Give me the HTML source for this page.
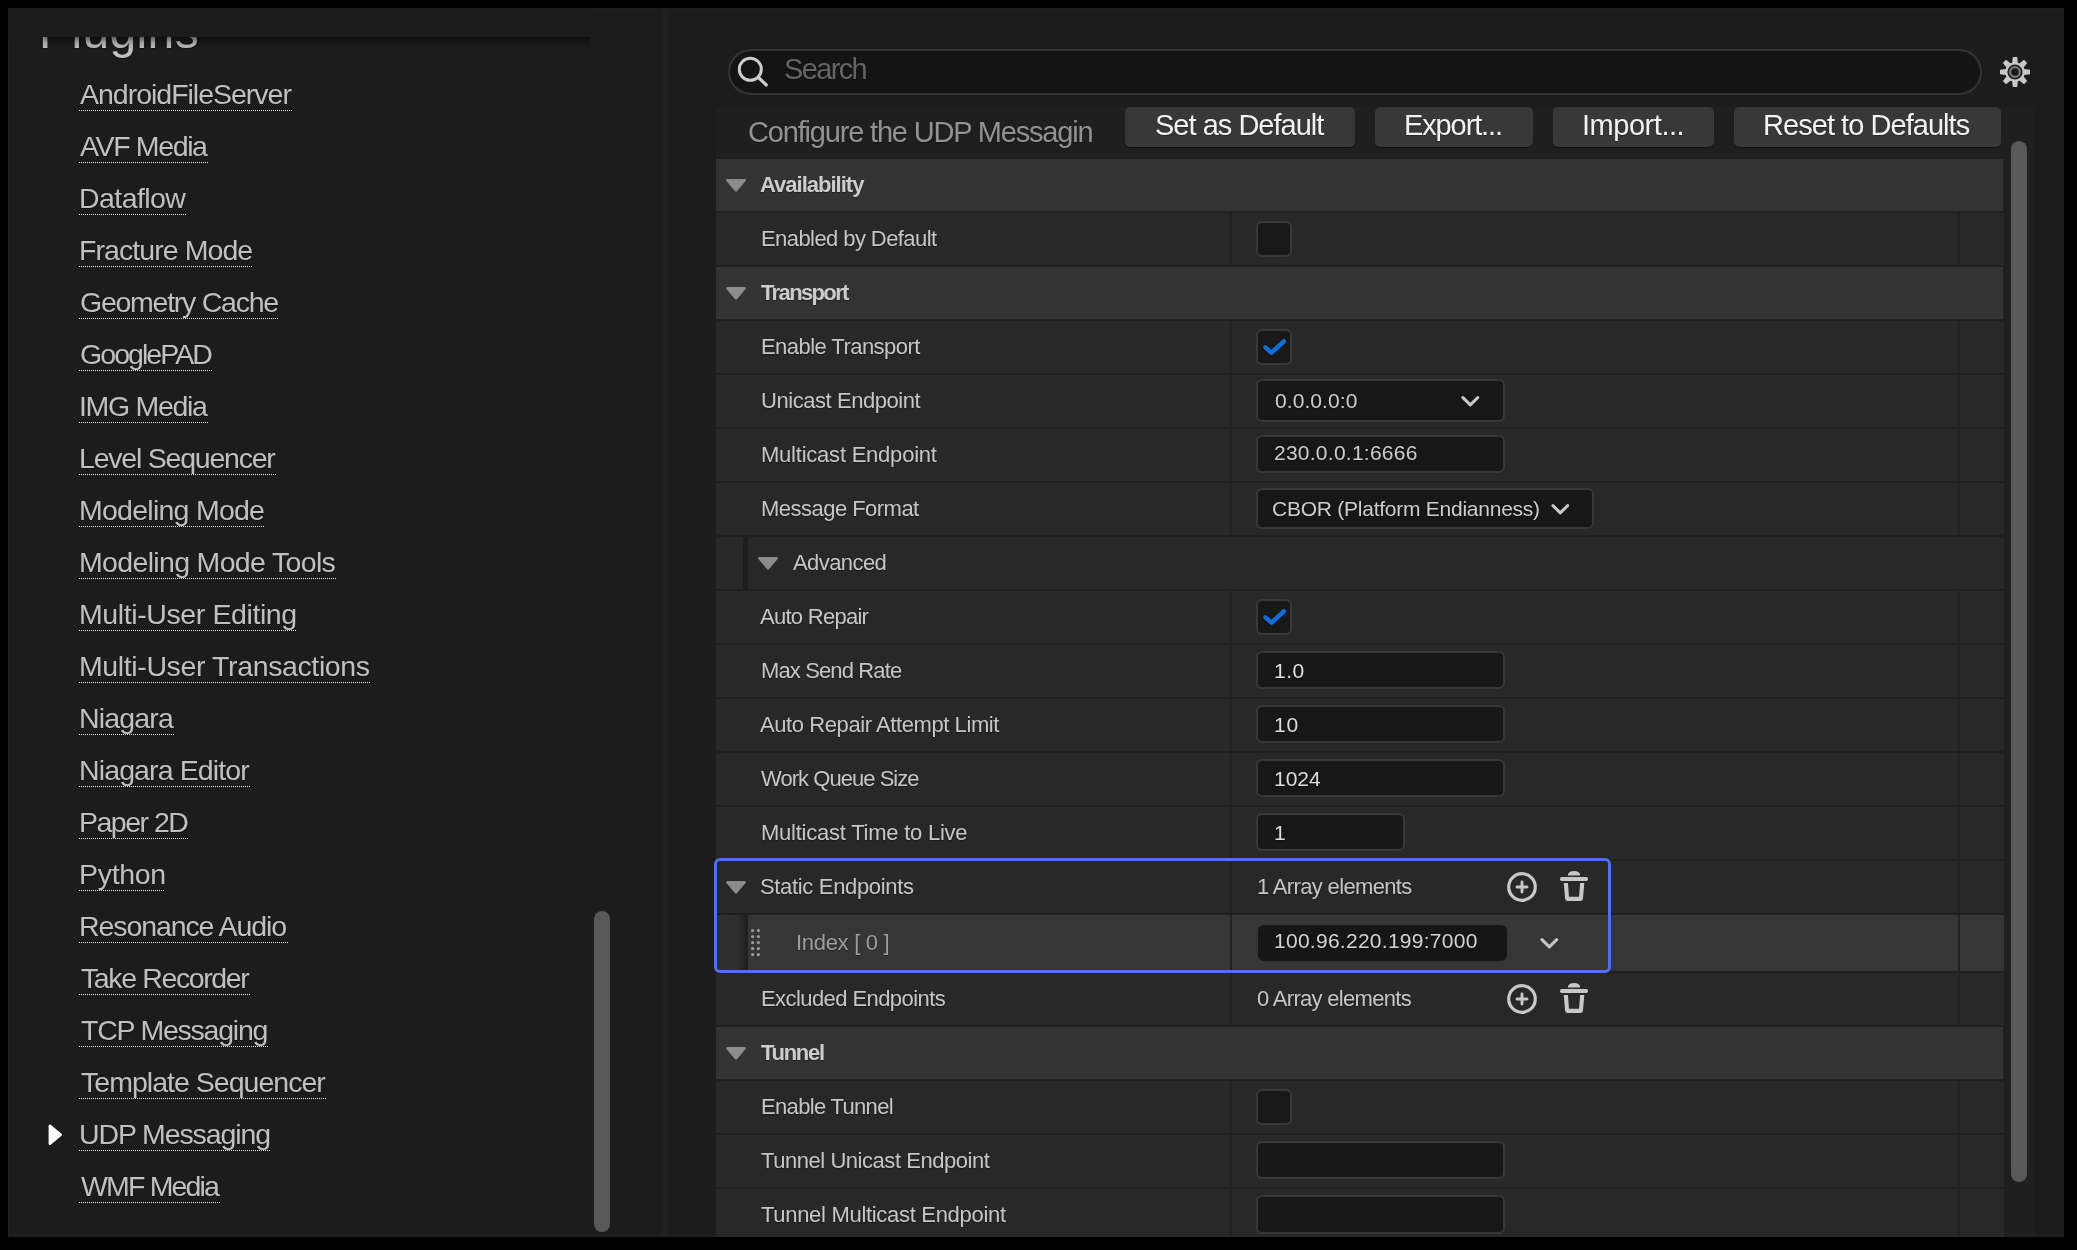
<!DOCTYPE html>
<html><head><meta charset="utf-8"><style>
html,body{margin:0;padding:0}
body{width:2077px;height:1250px;background:#000;position:relative;overflow:hidden;font-family:"Liberation Sans", sans-serif}
.t{position:absolute;white-space:pre;text-shadow:0 1px 1px rgba(0,0,0,0.35);will-change:transform}
.ul{position:absolute;height:1px;background-image:linear-gradient(to right,#e8e8e8 50%,transparent 50%);background-size:2px 1px}
#panel{position:absolute;left:8px;top:8px;width:2055px;height:1227px;background:#1c1c1c;border-left:1px solid #222;border-top:1px solid #202020;border-bottom:1px solid #202020}
#hdrcover{position:absolute;left:8px;top:8px;width:582px;height:29px;background:#1c1c1c}
#hdrshadow{position:absolute;left:38px;top:37px;width:552px;height:12px;background:linear-gradient(to bottom,rgba(0,0,0,0.5),rgba(0,0,0,0.18) 45%,rgba(0,0,0,0));-webkit-mask-image:linear-gradient(to right,transparent 0,#000 8px)}
#split{position:absolute;left:662px;top:8px;width:6px;height:1229px;background:#202020}
#sscroll{position:absolute;left:594px;top:911px;width:16px;height:321px;border-radius:8px;background:#595959}
#search{position:absolute;left:728px;top:49px;width:1250px;height:42px;border:2px solid #353535;border-radius:23px;background:#141414}
#main{position:absolute;left:716px;top:107px;width:1319px;height:1130px;background:#1f1f1f}
#mscroll{position:absolute;left:2011px;top:141px;width:16px;height:1041px;border-radius:8px;background:#595959}
.btn{position:absolute;top:107px;height:40px;background:#383838;border-radius:5px;box-shadow:0 1px 1px rgba(0,0,0,0.5)}
.row{position:absolute;left:716px;width:1288px}
.hdr{background:#333333;width:1287px}
.prop{background:#282828}
.idx{background:#363636}
.idxl{width:32px;background:linear-gradient(to right,#2f2f2f 0,#2e2e2e 22px,#1f1f1f 31px,#1f1f1f 32px)}
.advstripe{position:absolute;left:743px;width:5px;background:#1e1e1e}
.div1{position:absolute;left:1230px;width:2px;background:#222}
.div2{position:absolute;left:1958px;width:2px;background:#222}
.tri{position:absolute}
.cb{position:absolute;left:1256px;width:32px;height:32px;border:2px solid #393939;border-radius:6px;background:#181818}
.fld{position:absolute;left:1256px;box-sizing:border-box;border:2px solid #383838;border-radius:6px;background:#171717}
.fld.nob{border:none;background:#161616}
.chev{position:absolute}
.ico{position:absolute}
#sel{position:absolute;left:714px;top:858px;width:891px;height:109px;border:3px solid #506ef8;border-radius:6px}
</style></head><body>
<div id="panel"></div>
<div id="split"></div>

<div class="t lk" style="left:79.60px;top:80.38px;font-size:28.5px;line-height:28.5px;color:#c0c0c0;letter-spacing:-1.013px">AndroidFileServer</div>
<div class="ul" style="left:79px;top:110px;width:214px"></div>
<div class="t lk" style="left:79.60px;top:132.38px;font-size:28.5px;line-height:28.5px;color:#c0c0c0;letter-spacing:-1.363px">AVF Media</div>
<div class="ul" style="left:79px;top:162px;width:129px"></div>
<div class="t lk" style="left:78.70px;top:184.38px;font-size:28.5px;line-height:28.5px;color:#c0c0c0;letter-spacing:-0.572px">Dataflow</div>
<div class="ul" style="left:79px;top:214px;width:108px"></div>
<div class="t lk" style="left:78.70px;top:236.38px;font-size:28.5px;line-height:28.5px;color:#c0c0c0;letter-spacing:-0.931px">Fracture Mode</div>
<div class="ul" style="left:79px;top:266px;width:174px"></div>
<div class="t lk" style="left:79.70px;top:288.38px;font-size:28.5px;line-height:28.5px;color:#c0c0c0;letter-spacing:-1.252px">Geometry Cache</div>
<div class="ul" style="left:79px;top:318px;width:200px"></div>
<div class="t lk" style="left:79.70px;top:340.38px;font-size:28.5px;line-height:28.5px;color:#c0c0c0;letter-spacing:-1.938px">GooglePAD</div>
<div class="ul" style="left:79px;top:370px;width:134px"></div>
<div class="t lk" style="left:78.70px;top:392.38px;font-size:28.5px;line-height:28.5px;color:#c0c0c0;letter-spacing:-1.315px">IMG Media</div>
<div class="ul" style="left:79px;top:422px;width:129px"></div>
<div class="t lk" style="left:78.70px;top:444.38px;font-size:28.5px;line-height:28.5px;color:#c0c0c0;letter-spacing:-1.222px">Level Sequencer</div>
<div class="ul" style="left:79px;top:474px;width:198px"></div>
<div class="t lk" style="left:78.70px;top:496.38px;font-size:28.5px;line-height:28.5px;color:#c0c0c0;letter-spacing:-0.743px">Modeling Mode</div>
<div class="ul" style="left:79px;top:526px;width:185px"></div>
<div class="t lk" style="left:78.70px;top:548.38px;font-size:28.5px;line-height:28.5px;color:#c0c0c0;letter-spacing:-0.665px">Modeling Mode Tools</div>
<div class="ul" style="left:79px;top:578px;width:257px"></div>
<div class="t lk" style="left:78.70px;top:600.38px;font-size:28.5px;line-height:28.5px;color:#c0c0c0;letter-spacing:-0.397px">Multi-User Editing</div>
<div class="ul" style="left:79px;top:630px;width:218px"></div>
<div class="t lk" style="left:78.70px;top:652.38px;font-size:28.5px;line-height:28.5px;color:#c0c0c0;letter-spacing:-0.377px">Multi-User Transactions</div>
<div class="ul" style="left:79px;top:682px;width:292px"></div>
<div class="t lk" style="left:78.70px;top:704.38px;font-size:28.5px;line-height:28.5px;color:#c0c0c0;letter-spacing:-0.826px">Niagara</div>
<div class="ul" style="left:79px;top:734px;width:95px"></div>
<div class="t lk" style="left:78.70px;top:756.38px;font-size:28.5px;line-height:28.5px;color:#c0c0c0;letter-spacing:-0.876px">Niagara Editor</div>
<div class="ul" style="left:79px;top:786px;width:172px"></div>
<div class="t lk" style="left:78.70px;top:808.38px;font-size:28.5px;line-height:28.5px;color:#c0c0c0;letter-spacing:-1.503px">Paper 2D</div>
<div class="ul" style="left:79px;top:838px;width:110px"></div>
<div class="t lk" style="left:78.70px;top:860.38px;font-size:28.5px;line-height:28.5px;color:#c0c0c0;letter-spacing:-0.316px">Python</div>
<div class="ul" style="left:79px;top:890px;width:86px"></div>
<div class="t lk" style="left:78.70px;top:912.38px;font-size:28.5px;line-height:28.5px;color:#c0c0c0;letter-spacing:-1.096px">Resonance Audio</div>
<div class="ul" style="left:79px;top:942px;width:209px"></div>
<div class="t lk" style="left:80.70px;top:964.38px;font-size:28.5px;line-height:28.5px;color:#c0c0c0;letter-spacing:-1.379px">Take Recorder</div>
<div class="ul" style="left:79px;top:994px;width:172px"></div>
<div class="t lk" style="left:80.70px;top:1016.37px;font-size:28.5px;line-height:28.5px;color:#c0c0c0;letter-spacing:-1.241px">TCP Messaging</div>
<div class="ul" style="left:79px;top:1046px;width:189px"></div>
<div class="t lk" style="left:80.70px;top:1068.38px;font-size:28.5px;line-height:28.5px;color:#c0c0c0;letter-spacing:-0.978px">Template Sequencer</div>
<div class="ul" style="left:79px;top:1098px;width:248px"></div>
<div class="t lk" style="left:78.70px;top:1120.38px;font-size:28.5px;line-height:28.5px;color:#c0c0c0;letter-spacing:-1.114px">UDP Messaging</div>
<div class="ul" style="left:79px;top:1150px;width:192px"></div>
<div class="t lk" style="left:80.70px;top:1172.38px;font-size:28.5px;line-height:28.5px;color:#c0c0c0;letter-spacing:-1.830px">WMF Media</div>
<div class="ul" style="left:79px;top:1202px;width:141px"></div>
<div class="t" style="left:38.80px;top:7.70px;font-size:48px;line-height:48px;color:#c2c2c2;letter-spacing:0.378px">Plugins</div>
<div id="hdrcover"></div><div id="hdrshadow"></div>
<svg style="position:absolute;left:47px;top:1124px" width="16" height="22" viewBox="0 0 16 22"><path d="M2.9 1.8 V19.8 L13.7 10.8 Z" fill="#ffffff" stroke="#ffffff" stroke-width="2.6" stroke-linejoin="round"/></svg>
<div id="sscroll"></div>
<div id="search"></div>
<svg style="position:absolute;left:734px;top:53px" width="38" height="38" viewBox="0 0 38 38"><circle cx="16.3" cy="16.3" r="11" fill="none" stroke="#cdcdcd" stroke-width="3"/><path d="M24.6 24.6 L32.3 32" stroke="#cdcdcd" stroke-width="3.2" stroke-linecap="round"/></svg>
<svg style="position:absolute;left:1999px;top:56px" width="32" height="32" viewBox="-16 -16 32 32">
<g fill="#c8c8c8"><path d="M-2.9 -9 L-2.2 -15 L2.2 -15 L2.9 -9 Z" transform="rotate(0)"/><path d="M-2.9 -9 L-2.2 -15 L2.2 -15 L2.9 -9 Z" transform="rotate(45)"/><path d="M-2.9 -9 L-2.2 -15 L2.2 -15 L2.9 -9 Z" transform="rotate(90)"/><path d="M-2.9 -9 L-2.2 -15 L2.2 -15 L2.9 -9 Z" transform="rotate(135)"/><path d="M-2.9 -9 L-2.2 -15 L2.2 -15 L2.9 -9 Z" transform="rotate(180)"/><path d="M-2.9 -9 L-2.2 -15 L2.2 -15 L2.9 -9 Z" transform="rotate(225)"/><path d="M-2.9 -9 L-2.2 -15 L2.2 -15 L2.9 -9 Z" transform="rotate(270)"/><path d="M-2.9 -9 L-2.2 -15 L2.2 -15 L2.9 -9 Z" transform="rotate(315)"/>
<circle r="9.8"/></g><circle r="7.6" fill="#1c1c1c"/><circle r="4.9" fill="none" stroke="#7a7a7a" stroke-width="2.2"/></svg>
<div id="main"></div>
<div class="btn" style="left:1125px;width:230px"></div>
<div class="btn" style="left:1375px;width:158px"></div>
<div class="btn" style="left:1553px;width:161px"></div>
<div class="btn" style="left:1734px;width:267px"></div>
<div id="mscroll"></div>
<div class="row hdr" style="top:159px;height:52px"></div>
<svg class="tri" style="left:726px;top:178.5px" width="20" height="13" viewBox="0 0 20 13"><path d="M1.3 1.3 L18.7 1.3 L10 11.4 Z" fill="#8c8c8c" stroke="#8c8c8c" stroke-width="2.4" stroke-linejoin="round"/></svg>
<div class="row prop" style="top:213px;height:52px"></div>
<div class="div1" style="top:213px;height:52px"></div><div class="div2" style="top:213px;height:52px"></div>
<div class="row hdr" style="top:267px;height:52px"></div>
<svg class="tri" style="left:726px;top:286.5px" width="20" height="13" viewBox="0 0 20 13"><path d="M1.3 1.3 L18.7 1.3 L10 11.4 Z" fill="#8c8c8c" stroke="#8c8c8c" stroke-width="2.4" stroke-linejoin="round"/></svg>
<div class="row prop" style="top:321px;height:52px"></div>
<div class="div1" style="top:321px;height:52px"></div><div class="div2" style="top:321px;height:52px"></div>
<div class="row prop" style="top:375px;height:52px"></div>
<div class="div1" style="top:375px;height:52px"></div><div class="div2" style="top:375px;height:52px"></div>
<div class="row prop" style="top:429px;height:52px"></div>
<div class="div1" style="top:429px;height:52px"></div><div class="div2" style="top:429px;height:52px"></div>
<div class="row prop" style="top:483px;height:52px"></div>
<div class="div1" style="top:483px;height:52px"></div><div class="div2" style="top:483px;height:52px"></div>
<div class="row prop" style="top:537px;height:52px"></div>
<div class="advstripe" style="top:537px;height:52px"></div>
<svg class="tri" style="left:758px;top:557px" width="20" height="13" viewBox="0 0 20 13"><path d="M1.3 1.3 L18.7 1.3 L10 11.4 Z" fill="#8c8c8c" stroke="#8c8c8c" stroke-width="2.4" stroke-linejoin="round"/></svg>
<div class="row prop" style="top:591px;height:52px"></div>
<div class="div1" style="top:591px;height:52px"></div><div class="div2" style="top:591px;height:52px"></div>
<div class="row prop" style="top:645px;height:52px"></div>
<div class="div1" style="top:645px;height:52px"></div><div class="div2" style="top:645px;height:52px"></div>
<div class="row prop" style="top:699px;height:52px"></div>
<div class="div1" style="top:699px;height:52px"></div><div class="div2" style="top:699px;height:52px"></div>
<div class="row prop" style="top:753px;height:52px"></div>
<div class="div1" style="top:753px;height:52px"></div><div class="div2" style="top:753px;height:52px"></div>
<div class="row prop" style="top:807px;height:52px"></div>
<div class="div1" style="top:807px;height:52px"></div><div class="div2" style="top:807px;height:52px"></div>
<div class="row prop" style="top:861px;height:52px"></div>
<div class="div1" style="top:861px;height:52px"></div><div class="div2" style="top:861px;height:52px"></div>
<svg class="tri" style="left:726px;top:880.5px" width="20" height="13" viewBox="0 0 20 13"><path d="M1.3 1.3 L18.7 1.3 L10 11.4 Z" fill="#8c8c8c" stroke="#8c8c8c" stroke-width="2.4" stroke-linejoin="round"/></svg>
<div class="row idx" style="top:915px;height:56px"></div>
<div class="row idxl" style="top:915px;height:56px"></div>
<div class="div1" style="top:915px;height:56px"></div><div class="div2" style="top:915px;height:56px"></div>
<div class="row prop" style="top:973px;height:52px"></div>
<div class="div1" style="top:973px;height:52px"></div><div class="div2" style="top:973px;height:52px"></div>
<div class="row hdr" style="top:1027px;height:52px"></div>
<svg class="tri" style="left:726px;top:1046.5px" width="20" height="13" viewBox="0 0 20 13"><path d="M1.3 1.3 L18.7 1.3 L10 11.4 Z" fill="#8c8c8c" stroke="#8c8c8c" stroke-width="2.4" stroke-linejoin="round"/></svg>
<div class="row prop" style="top:1081px;height:52px"></div>
<div class="div1" style="top:1081px;height:52px"></div><div class="div2" style="top:1081px;height:52px"></div>
<div class="row prop" style="top:1135px;height:52px"></div>
<div class="div1" style="top:1135px;height:52px"></div><div class="div2" style="top:1135px;height:52px"></div>
<div class="row prop" style="top:1189px;height:48px"></div>
<div class="div1" style="top:1189px;height:48px"></div><div class="div2" style="top:1189px;height:48px"></div>
<div class="cb" style="top:221px"></div>
<div class="cb" style="top:329px"><svg width="36" height="36" viewBox="0 0 36 36" style="position:absolute;left:-2px;top:-2px"><path d="M9.4 18.4 L15.5 23.7 L27.8 12.3" fill="none" stroke="#0a70e0" stroke-width="4.4" stroke-linecap="round" stroke-linejoin="round"/></svg></div>
<div class="cb" style="top:599px"><svg width="36" height="36" viewBox="0 0 36 36" style="position:absolute;left:-2px;top:-2px"><path d="M9.4 18.4 L15.5 23.7 L27.8 12.3" fill="none" stroke="#0a70e0" stroke-width="4.4" stroke-linecap="round" stroke-linejoin="round"/></svg></div>
<div class="cb" style="top:1089px"></div>
<div class="fld" style="top:379px;width:249px;height:43px"></div>
<svg class="chev" style="left:1460.6px;top:395.6px" width="19" height="11" viewBox="0 0 19 11"><path d="M1.9 1.6 L9.3 8.8 L16.7 1.6" fill="none" stroke="#c8c8c8" stroke-width="3" stroke-linecap="round" stroke-linejoin="round"/></svg>
<div class="fld" style="top:435px;width:249px;height:38px"></div>
<div class="fld" style="top:488px;width:338px;height:41px"></div>
<svg class="chev" style="left:1550.6px;top:503.9px" width="19" height="11" viewBox="0 0 19 11"><path d="M1.9 1.6 L9.3 8.8 L16.7 1.6" fill="none" stroke="#c8c8c8" stroke-width="3" stroke-linecap="round" stroke-linejoin="round"/></svg>
<div class="fld" style="top:651px;width:249px;height:38px"></div>
<div class="fld" style="top:705px;width:249px;height:38px"></div>
<div class="fld" style="top:759px;width:249px;height:38px"></div>
<div class="fld" style="top:813px;width:149px;height:38px"></div>
<div class="fld nob" style="left:1258px;top:925px;width:249px;height:36px"></div>
<svg class="chev" style="left:1539.6px;top:937.8px" width="19" height="11" viewBox="0 0 19 11"><path d="M1.9 1.6 L9.3 8.8 L16.7 1.6" fill="none" stroke="#c8c8c8" stroke-width="3" stroke-linecap="round" stroke-linejoin="round"/></svg>
<div class="fld" style="top:1141px;width:249px;height:38px"></div>
<div class="fld" style="top:1195px;width:249px;height:39px"></div>
<svg style="position:absolute;left:751.4px;top:929.4px" width="10" height="28" viewBox="0 0 10 28"><rect x="0" y="0" width="3.2" height="3.2" rx="1.6" fill="#9a9a9a"/><rect x="0" y="6" width="3.2" height="3.2" rx="1.6" fill="#9a9a9a"/><rect x="0" y="12" width="3.2" height="3.2" rx="1.6" fill="#9a9a9a"/><rect x="0" y="18" width="3.2" height="3.2" rx="1.6" fill="#9a9a9a"/><rect x="0" y="24" width="3.2" height="3.2" rx="1.6" fill="#9a9a9a"/><rect x="5.8" y="0" width="3.2" height="3.2" rx="1.6" fill="#9a9a9a"/><rect x="5.8" y="6" width="3.2" height="3.2" rx="1.6" fill="#9a9a9a"/><rect x="5.8" y="12" width="3.2" height="3.2" rx="1.6" fill="#9a9a9a"/><rect x="5.8" y="18" width="3.2" height="3.2" rx="1.6" fill="#9a9a9a"/><rect x="5.8" y="24" width="3.2" height="3.2" rx="1.6" fill="#9a9a9a"/></svg>
<svg class="ico" style="left:1505px;top:870px" width="34" height="34" viewBox="0 0 34 34"><circle cx="17" cy="17" r="13.3" fill="none" stroke="#c8c8c8" stroke-width="3.2"/><path d="M17 12 V22 M12 17 H22" stroke="#c8c8c8" stroke-width="2.9" stroke-linecap="round"/></svg><svg class="ico" style="left:1556px;top:867px" width="36" height="34" viewBox="0 0 36 34"><path d="M11.9 8.5 Q11.9 4 18 4 Q24.2 4 24.2 8.5 Z" fill="#c8c8c8"/><rect x="3.9" y="9.9" width="28.2" height="4.1" rx="2" fill="#c8c8c8"/><path d="M7.8 16 H28.3 L27 31.5 Q26.8 34 24.3 34 H11.8 Q9.3 34 9.1 31.5 Z M11.9 16 L13 29.7 H23 L24.2 16 Z" fill="#c8c8c8" fill-rule="evenodd"/></svg>
<svg class="ico" style="left:1505px;top:982px" width="34" height="34" viewBox="0 0 34 34"><circle cx="17" cy="17" r="13.3" fill="none" stroke="#c8c8c8" stroke-width="3.2"/><path d="M17 12 V22 M12 17 H22" stroke="#c8c8c8" stroke-width="2.9" stroke-linecap="round"/></svg><svg class="ico" style="left:1556px;top:979px" width="36" height="34" viewBox="0 0 36 34"><path d="M11.9 8.5 Q11.9 4 18 4 Q24.2 4 24.2 8.5 Z" fill="#c8c8c8"/><rect x="3.9" y="9.9" width="28.2" height="4.1" rx="2" fill="#c8c8c8"/><path d="M7.8 16 H28.3 L27 31.5 Q26.8 34 24.3 34 H11.8 Q9.3 34 9.1 31.5 Z M11.9 16 L13 29.7 H23 L24.2 16 Z" fill="#c8c8c8" fill-rule="evenodd"/></svg>
<div class="t" style="left:784.40px;top:55.15px;font-size:29px;line-height:29px;color:#646464;letter-spacing:-1.651px">Search</div>
<div class="t" style="left:748.00px;top:118.35px;font-size:29px;line-height:29px;color:#929292;letter-spacing:-1.178px">Configure the UDP Messagin</div>
<div class="t" style="left:1154.70px;top:111.35px;font-size:29px;line-height:29px;color:#f2f2f2;letter-spacing:-0.985px">Set as Default</div>
<div class="t" style="left:1404.00px;top:111.35px;font-size:29px;line-height:29px;color:#f2f2f2;letter-spacing:-1.116px">Export...</div>
<div class="t" style="left:1582.00px;top:111.35px;font-size:29px;line-height:29px;color:#f2f2f2;letter-spacing:-0.462px">Import...</div>
<div class="t" style="left:1763.00px;top:111.35px;font-size:29px;line-height:29px;color:#f2f2f2;letter-spacing:-0.953px">Reset to Defaults</div>
<div class="t" style="left:760.20px;top:173.60px;font-size:22px;line-height:22px;color:#cccccc;letter-spacing:-0.991px;font-weight:700">Availability</div>
<div class="t" style="left:760.70px;top:227.90px;font-size:22px;line-height:22px;color:#c6c6c6;letter-spacing:-0.576px">Enabled by Default</div>
<div class="t" style="left:760.60px;top:281.60px;font-size:22px;line-height:22px;color:#cccccc;letter-spacing:-1.629px;font-weight:700">Transport</div>
<div class="t" style="left:760.70px;top:335.90px;font-size:22px;line-height:22px;color:#c6c6c6;letter-spacing:-0.549px">Enable Transport</div>
<div class="t" style="left:760.70px;top:389.90px;font-size:22px;line-height:22px;color:#c6c6c6;letter-spacing:-0.441px">Unicast Endpoint</div>
<div class="t" style="left:760.70px;top:443.90px;font-size:22px;line-height:22px;color:#c6c6c6;letter-spacing:-0.226px">Multicast Endpoint</div>
<div class="t" style="left:760.70px;top:497.90px;font-size:22px;line-height:22px;color:#c6c6c6;letter-spacing:-0.526px">Message Format</div>
<div class="t" style="left:792.70px;top:551.90px;font-size:22px;line-height:22px;color:#c6c6c6;letter-spacing:-0.574px">Advanced</div>
<div class="t" style="left:760.20px;top:605.90px;font-size:22px;line-height:22px;color:#c6c6c6;letter-spacing:-0.725px">Auto Repair</div>
<div class="t" style="left:760.70px;top:659.90px;font-size:22px;line-height:22px;color:#c6c6c6;letter-spacing:-0.875px">Max Send Rate</div>
<div class="t" style="left:760.20px;top:713.90px;font-size:22px;line-height:22px;color:#c6c6c6;letter-spacing:-0.419px">Auto Repair Attempt Limit</div>
<div class="t" style="left:760.50px;top:767.90px;font-size:22px;line-height:22px;color:#c6c6c6;letter-spacing:-0.962px">Work Queue Size</div>
<div class="t" style="left:760.70px;top:821.90px;font-size:22px;line-height:22px;color:#c6c6c6;letter-spacing:-0.237px">Multicast Time to Live</div>
<div class="t" style="left:760.00px;top:875.50px;font-size:22px;line-height:22px;color:#c6c6c6;letter-spacing:-0.332px">Static Endpoints</div>
<div class="t" style="left:795.50px;top:931.90px;font-size:22px;line-height:22px;color:#9d9d9d;letter-spacing:-0.300px">Index [ 0 ]</div>
<div class="t" style="left:760.70px;top:987.90px;font-size:22px;line-height:22px;color:#c6c6c6;letter-spacing:-0.574px">Excluded Endpoints</div>
<div class="t" style="left:760.60px;top:1041.60px;font-size:22px;line-height:22px;color:#cccccc;letter-spacing:-1.291px;font-weight:700">Tunnel</div>
<div class="t" style="left:760.70px;top:1095.90px;font-size:22px;line-height:22px;color:#c6c6c6;letter-spacing:-0.673px">Enable Tunnel</div>
<div class="t" style="left:760.60px;top:1149.90px;font-size:22px;line-height:22px;color:#c6c6c6;letter-spacing:-0.453px">Tunnel Unicast Endpoint</div>
<div class="t" style="left:760.60px;top:1203.90px;font-size:22px;line-height:22px;color:#c6c6c6;letter-spacing:-0.305px">Tunnel Multicast Endpoint</div>
<div class="t" style="left:1274.50px;top:390.15px;font-size:21px;line-height:21px;color:#cdcdcd;letter-spacing:0.081px">0.0.0.0:0</div>
<div class="t" style="left:1273.50px;top:441.75px;font-size:21px;line-height:21px;color:#cdcdcd;letter-spacing:0.250px">230.0.0.1:6666</div>
<div class="t" style="left:1272.00px;top:497.95px;font-size:21px;line-height:21px;color:#cdcdcd;letter-spacing:-0.247px">CBOR (Platform Endianness)</div>
<div class="t" style="left:1274.00px;top:659.85px;font-size:21px;line-height:21px;color:#dedede;letter-spacing:0.493px">1.0</div>
<div class="t" style="left:1274.00px;top:713.85px;font-size:21px;line-height:21px;color:#dedede;letter-spacing:0.721px">10</div>
<div class="t" style="left:1274.00px;top:767.85px;font-size:21px;line-height:21px;color:#dedede;letter-spacing:-0.013px">1024</div>
<div class="t" style="left:1274.00px;top:821.85px;font-size:21px;line-height:21px;color:#dedede;letter-spacing:0.000px">1</div>
<div class="t" style="left:1256.50px;top:875.60px;font-size:22px;line-height:22px;color:#c6c6c6;letter-spacing:-0.653px">1 Array elements</div>
<div class="t" style="left:1273.50px;top:930.15px;font-size:21px;line-height:21px;color:#d4d4d4;letter-spacing:0.270px">100.96.220.199:7000</div>
<div class="t" style="left:1257.00px;top:987.90px;font-size:22px;line-height:22px;color:#c6c6c6;letter-spacing:-0.686px">0 Array elements</div>
<div id="sel"></div>
</body></html>
